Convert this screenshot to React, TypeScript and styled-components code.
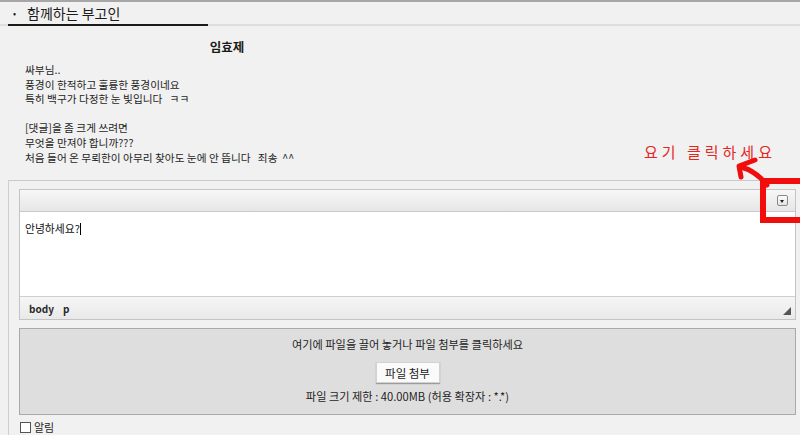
import styled, { createGlobalStyle } from 'styled-components'

const GlobalStyle = createGlobalStyle`
    html, body {
        margin: 0;
        padding: 0;
        background: #f1f1f1;
    }
    body {
        font-family: "Noto Sans CJK KR", "Noto Sans", sans-serif;
        color: #222;
        overflow: hidden;
    }
`

const lines = [
    '싸부님..',
    '풍경이 한적하고 훌륭한 풍경이네요',
    '특히 백구가 다정한 눈 빛입니다   ㅋㅋ',
    '',
    '[댓글]을 좀 크게 쓰려면',
    '무엇을 만져야 합니까???',
    '처음 들어 온 무뢰한이 아무리 찾아도 눈에 안 뜹니다   죄송  ^^',
]

export default function App() {
    return (
        <>
            <GlobalStyle />
            <Page>
                <HeaderRow>
                    <Title><Bullet>•</Bullet>함께하는 부고인</Title>
                </HeaderRow>

                <Post>
                    <Name>임효제</Name>
                    <Lines>
                        {lines.map((line, i) => (
                            <Line key={i}>{line || '\u00a0'}</Line>
                        ))}
                    </Lines>
                </Post>

                <CommentBox>
                    <Editor>
                        <Toolbar>
                            <DropButton />
                        </Toolbar>
                        <EditArea>
                            안녕하세요?<Caret />
                        </EditArea>
                        <StatusBar>
                            <span>body</span>
                            <span>p</span>
                            <Grip />
                        </StatusBar>
                    </Editor>

                    <FileArea>
                        <FileText>여기에 파일을 끌어 놓거나 파일 첨부를 클릭하세요</FileText>
                        <AttachButton>파일 첨부</AttachButton>
                        <FileText>파일 크기 제한 : 40.00MB (허용 확장자 : *.*)</FileText>
                    </FileArea>

                    <CheckRow>
                        <CheckBox />
                        <span>알림</span>
                    </CheckRow>
                </CommentBox>

                {/* 빨간 손글씨 표시 */}
                <Note>요기 클릭하세요</Note>
                <Marks width="800" height="435" viewBox="0 0 800 435">
                    <rect x="763" y="181" width="40" height="39" fill="none" stroke="#f20d0d" strokeWidth="6" />
                    <path d="M767 185 Q756 171 741 167" fill="none" stroke="#f20d0d" strokeWidth="5" strokeLinecap="round" />
                    <path d="M755 160 L739 166 L741 177" fill="none" stroke="#f20d0d" strokeWidth="5" strokeLinecap="round" strokeLinejoin="round" />
                </Marks>
            </Page>
        </>
    )
}

const Page = styled.div`
    position: relative;
    width: 800px;
    height: 435px;
    overflow: hidden;
    border-top: 2px solid #a6a6a6;
    box-sizing: border-box;
`

const HeaderRow = styled.div`
    height: 22px;
    border-bottom: 2px solid #dedede;
`

const Title = styled.div`
    width: 195px;
    height: 22px;
    margin-left: 8px;
    padding-left: 5px;
    border-bottom: 2px solid #1b1b1b;
    font-size: 14px;
    line-height: 22px;
    color: #1b1b1b;
`

const Bullet = styled.span`
    display: inline-block;
    width: 14px;
    font-size: 9px;
    vertical-align: 2px;
`

const Post = styled.div`
    padding: 13px 0 0 25px;
    height: 154px;
    box-sizing: border-box;
`

const Name = styled.div`
    width: 404px;
    text-align: center;
    font-size: 12.5px;
    font-weight: 700;
    line-height: 16px;
    color: #1a1a1a;
`

const Lines = styled.div`
    margin-top: 8px;
`

const Line = styled.div`
    font-size: 10.7px;
    line-height: 14.6px;
    white-space: pre;
    color: #1e1e1e;
`

const CommentBox = styled.div`
    width: 792px;
    margin-left: 8px;
    box-sizing: border-box;
    border-top: 1px solid #c9c9c9;
    border-left: 1px solid #cfcfcf;
    padding: 8px 4px 20px 10px;
`

const Editor = styled.div`
    border: 1px solid #c4c4c4;
    background: #fff;
`

const Toolbar = styled.div`
    height: 21px;
    border-bottom: 1px solid #c9c9c9;
    background: linear-gradient(#f7f7f7, #e6e6e6);
    display: flex;
    align-items: center;
    justify-content: flex-end;
    padding-right: 7px;
`

const DropButton = styled.div`
    position: relative;
    width: 9px;
    height: 9px;
    border: 1px solid #8a8a8a;
    border-radius: 2px;
    background: linear-gradient(#fdfdfd, #e2e2e2);
    &::after {
        content: '';
        position: absolute;
        left: 2px;
        top: 4px;
        border-left: 2.5px solid transparent;
        border-right: 2.5px solid transparent;
        border-top: 3px solid #222;
    }
`

const EditArea = styled.div`
    height: 84px;
    box-sizing: border-box;
    padding: 8px 5px;
    font-size: 10.8px;
    line-height: 16px;
    color: #111;
`

const Caret = styled.span`
    display: inline-block;
    width: 1px;
    height: 12px;
    background: #000;
    vertical-align: -2px;
`

const StatusBar = styled.div`
    position: relative;
    height: 22px;
    border-top: 1px solid #cfcfcf;
    background: linear-gradient(#f6f6f6, #e9e9e9);
    display: flex;
    align-items: center;
    gap: 9px;
    padding-left: 9px;
    font-size: 10px;
    font-weight: 700;
    color: #2a2a2a;
`

const Grip = styled.div`
    position: absolute;
    right: 4px;
    bottom: 4px;
    width: 0;
    height: 0;
    border-left: 8px solid transparent;
    border-bottom: 8px solid #555;
`

const FileArea = styled.div`
    margin-top: 8px;
    background: #dedede;
    border: 1px solid #a9a9a9;
    padding: 7px 0 10px;
    display: flex;
    flex-direction: column;
    align-items: center;
`

const FileText = styled.div`
    font-size: 11.2px;
    line-height: 16px;
    color: #1e1e1e;
`

const AttachButton = styled.button`
    margin: 10px 0 5px;
    width: 64px;
    height: 21px;
    padding: 0;
    background: #fafafa;
    border: 1px solid #d2d2d2;
    box-shadow: 0 1px 1px #9c9c9c;
    font-family: inherit;
    font-size: 11.5px;
    color: #1a1a1a;
`

const CheckRow = styled.div`
    margin-top: 6px;
    display: flex;
    align-items: center;
    gap: 3px;
    padding-left: 1px;
    font-size: 11px;
    line-height: 12px;
    color: #1e1e1e;
`

const CheckBox = styled.span`
    width: 9px;
    height: 9px;
    border: 1px solid #555;
    background: #fff;
`

const Note = styled.div`
    position: absolute;
    left: 644px;
    top: 139px;
    font-size: 15px;
    letter-spacing: 4px;
    color: #e4261d;
    white-space: nowrap;
`

const Marks = styled.svg`
    position: absolute;
    left: 0;
    top: -2px;
    pointer-events: none;
`
